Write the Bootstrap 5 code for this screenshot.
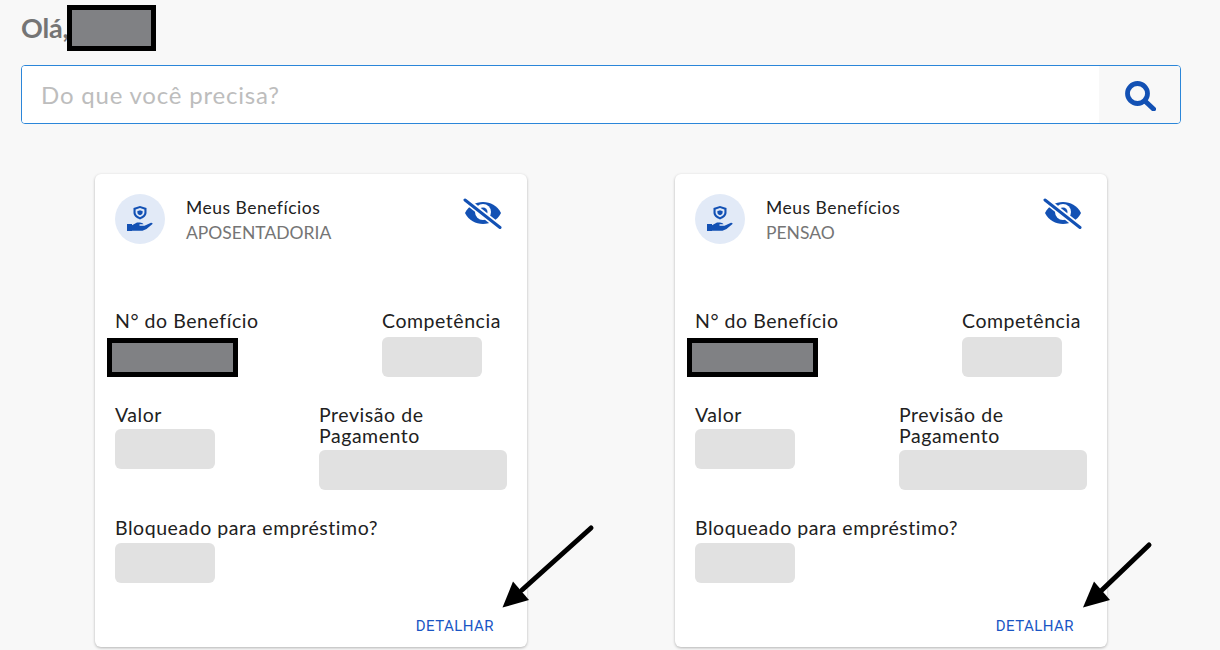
<!DOCTYPE html>
<html lang="pt-BR">
<head>
<meta charset="utf-8">
<title>Meus Benefícios</title>
<link href="https://cdn.jsdelivr.net/npm/bootstrap@5.3.0/dist/css/bootstrap.min.css" rel="stylesheet">
<style>
html,body{height:650px;overflow:hidden}
body{background:#f8f8f8;font-family:"Lato","Open Sans",sans-serif;color:#212121}
.page-wrap{padding:5px 39px 0 21px;position:relative;height:650px}
.hello{font-size:27px;font-weight:700;color:#757575;height:46px;margin:0;letter-spacing:-.2px;line-height:44px}
.hello-mask{width:89px;height:46px;background:#808184;border:5px solid #000;margin-left:-2px}
.search-box{height:59px;margin-top:14px;border:1px solid #2b86d9;border-radius:4px;background:#fff;overflow:hidden}
.search-input{font-size:24px;padding:0 19px;color:#212121;letter-spacing:.8px}
.search-input::placeholder{color:#bdbdbd;opacity:1}
.search-btn{width:81px;background:#f8f8f8}
.cards-row{margin-top:50px;gap:148px}
.benefit{width:432px;height:473px;background:#fff;border-radius:6px;box-shadow:0 1px 3px rgba(0,0,0,.28);padding:20px 20px 0}
.icon-disc{width:50px;height:50px;background:#e2eaf7}
.head-text{margin-left:21px;font-size:17.5px;line-height:25px;margin-top:1px}
.head-title{letter-spacing:.5px}
.head-sub{color:#757575}
.eye-wrap{margin:3px 4px 0 0;line-height:0}
.field-label{font-size:19.5px;line-height:21px;letter-spacing:.55px}
.blank{width:100px;height:40px;background:#e1e1e1;border-radius:6px}
.blank-wide{width:188px}
.row-a{margin-top:65px}
.row-b{margin-top:27px}
.row-c{margin-top:27px}
.slot-a{width:125px}
.slot-b{width:188px}
.label-gap{margin-top:6px}
.label-gap-b{margin-top:4px}
.label-gap-c{margin-top:5px}
.no-mask{display:block;width:131px;height:39px;background:#808184;border:5px solid #000;margin:7px 0 0 -8px}
.detail-link{font-family:"Roboto",sans-serif;font-size:15px;letter-spacing:.45px;color:#1a56c4;text-decoration:none;line-height:16px;margin:35px 13px 0 0}
.arrow-layer{position:absolute;left:0;top:0;width:1220px;height:650px;pointer-events:none}
.sprite{position:absolute;width:0;height:0}
</style>
</head>
<body>
<svg class="sprite" aria-hidden="true">
  <symbol id="ic-hand" viewBox="0 0 26 26">
    <path fill="#1351b4" fill-rule="evenodd" d="M13 0l6.500 2v4.800c0 3-2.600 5.200-6.500 6.700-3.900-1.500-6.500-3.700-6.500-6.700V2zM13 2.100L8.600 3.500v3.300c0 1.900 1.800 3.300 4.400 4.400 2.600-1.100 4.400-2.500 4.400-4.400V3.500z"/>
    <path fill="#1351b4" d="M13 4.200c.9.600 1.700.8 2.600.8v1.700c0 1-1.100 1.900-2.600 2.600-1.500-.7-2.600-1.600-2.600-2.600V5c.9 0 1.700-.2 2.600-.8z"/>
    <path fill="#1351b4" d="M0 18h5v1.200l5-2.600h3c1 0 3 .8 3.500 1.600h-4v1.500h5l6-2.800c1.500-.5 2.500.5 2 1.200l-6 5-4 1.700H5V25H0z"/>
  </symbol>
  <symbol id="ic-eye" viewBox="0 0 40 34">
    <path fill="#1351b4" d="M2 16C6 8.500 12.500 5 20 5s14 3.500 18 11c-4 7.500-10.500 11-18 11S6 23.500 2 16z"/>
    <circle cx="20" cy="15" r="8" fill="#fff"/>
    <circle cx="20" cy="15" r="4.500" fill="#1351b4"/>
    <path stroke="#fff" stroke-width="6.500" d="M0 1 40 33"/>
    <path stroke="#1351b4" stroke-width="3" stroke-linecap="round" d="M2 3 37 30.500"/>
  </symbol>
</svg>
<div class="page-wrap">
  <h1 class="hello d-flex align-items-center">Olá,<span class="hello-mask d-block"></span></h1>
  <div class="search-box d-flex">
    <input class="search-input form-control border-0 rounded-0 shadow-none h-100 flex-grow-1" type="text" placeholder="Do que você precisa?">
    <div class="search-btn d-flex align-items-center justify-content-center flex-shrink-0">
      <svg width="32" height="32" viewBox="0 0 32 32" fill="none" stroke="#1351b4" stroke-linecap="round"><circle cx="13.500" cy="14.500" r="10" stroke-width="4.800"/><path d="M21.500 22.500 29.500 30" stroke-width="5"/></svg>
    </div>
  </div>
  <div class="cards-row d-flex justify-content-center">
    <div class="benefit">
      <div class="d-flex">
        <div class="icon-disc rounded-circle d-flex align-items-center justify-content-center flex-shrink-0">
          <svg width="26" height="26"><use href="#ic-hand"/></svg>
        </div>
        <div class="head-text flex-grow-1"><div class="head-title">Meus Benefícios</div><div class="head-sub">APOSENTADORIA</div></div>
        <div class="eye-wrap"><svg width="40" height="34"><use href="#ic-eye"/></svg></div>
      </div>
      <div class="row-a d-flex justify-content-between">
        <div><div class="field-label">N° do Benefício</div><span class="no-mask"></span></div>
        <div class="slot-a"><div class="field-label">Competência</div><div class="blank label-gap"></div></div>
      </div>
      <div class="row-b d-flex justify-content-between">
        <div><div class="field-label">Valor</div><div class="blank label-gap-b"></div></div>
        <div class="slot-b"><div class="field-label">Previsão de<br>Pagamento</div><div class="blank blank-wide label-gap-b"></div></div>
      </div>
      <div class="row-c">
        <div class="field-label">Bloqueado para empréstimo?</div>
        <div class="blank label-gap-c"></div>
      </div>
      <div class="d-flex justify-content-end"><a class="detail-link" href="#">DETALHAR</a></div>
    </div>
    <div class="benefit">
      <div class="d-flex">
        <div class="icon-disc rounded-circle d-flex align-items-center justify-content-center flex-shrink-0">
          <svg width="26" height="26"><use href="#ic-hand"/></svg>
        </div>
        <div class="head-text flex-grow-1"><div class="head-title">Meus Benefícios</div><div class="head-sub">PENSAO</div></div>
        <div class="eye-wrap"><svg width="40" height="34"><use href="#ic-eye"/></svg></div>
      </div>
      <div class="row-a d-flex justify-content-between">
        <div><div class="field-label">N° do Benefício</div><span class="no-mask"></span></div>
        <div class="slot-a"><div class="field-label">Competência</div><div class="blank label-gap"></div></div>
      </div>
      <div class="row-b d-flex justify-content-between">
        <div><div class="field-label">Valor</div><div class="blank label-gap-b"></div></div>
        <div class="slot-b"><div class="field-label">Previsão de<br>Pagamento</div><div class="blank blank-wide label-gap-b"></div></div>
      </div>
      <div class="row-c">
        <div class="field-label">Bloqueado para empréstimo?</div>
        <div class="blank label-gap-c"></div>
      </div>
      <div class="d-flex justify-content-end"><a class="detail-link" href="#">DETALHAR</a></div>
    </div>
  </div>
  <svg class="arrow-layer" viewBox="0 0 1220 650">
    <path stroke="#000" stroke-width="5" stroke-linecap="round" d="M591 528 522 590"/><path d="M502.500 607.500 513 581.500 529 600z"/>
    <path stroke="#000" stroke-width="5" stroke-linecap="round" d="M1149 545 1102 590"/><path d="M1083 607.500 1094 581.500 1110 600z"/>
  </svg>
</div>
<script src="https://cdn.jsdelivr.net/npm/bootstrap@5.3.0/dist/js/bootstrap.bundle.min.js"></script>
</body>
</html>
